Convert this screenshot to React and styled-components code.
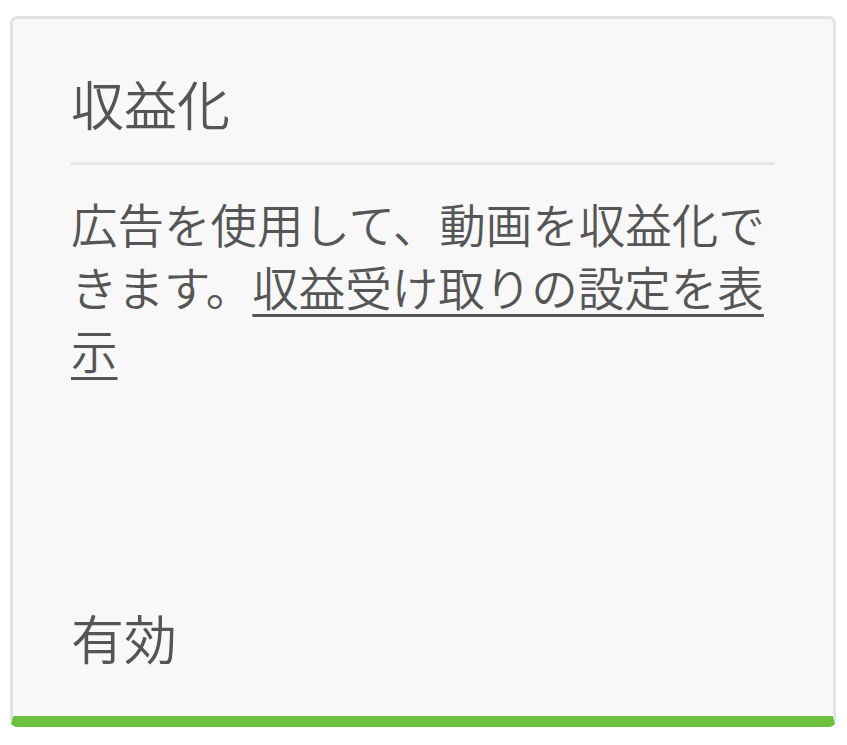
import React from 'react'
import styled, { createGlobalStyle } from 'styled-components'

const GlobalStyle = createGlobalStyle`
  html, body {
    margin: 0;
    padding: 0;
    background: #ffffff;
  }
  body {
    font-family: "Noto Sans CJK JP", "Noto Sans", sans-serif;
    color: #555555;
  }
`

const Page = styled.div`
  padding: 16px 11px 18px 10px;
`

const Card = styled.section`
  box-sizing: border-box;
  height: 711px;
  background: #f8f8f8;
  border: 3px solid #e3e3e3;
  border-bottom: 11px solid #6cc13f;
  border-radius: 7px;
  display: flex;
  flex-direction: column;
  padding: 0 58px;
`

const Title = styled.h2`
  margin: 0;
  padding-top: 45px;
  font-size: 53px;
  font-weight: 350;
  line-height: 78px;
  color: #555555;
`

const Divider = styled.hr`
  margin: 20px 0 0 0;
  border: 0;
  height: 3px;
  background: #e6e6e6;
`

const Description = styled.p`
  margin: 26px 0 0 0;
  font-size: 46.5px;
  font-weight: 350;
  line-height: 63px;
  color: #555555;
`

const Link = styled.a`
  color: #555555;
  text-decoration: underline;
  text-decoration-thickness: 3px;
  text-underline-offset: 8px;
`

const Status = styled.div`
  margin-top: auto;
  margin-bottom: 42px;
  font-size: 53px;
  font-weight: 350;
  line-height: 74px;
  color: #555555;
`

export default function App() {
  return (
    <>
      <GlobalStyle />
      <Page>
        <Card>
          <Title>収益化</Title>
          <Divider />
          <Description>
            広告を使用して、動画を収益化できます。<Link href="#">収益受け取りの設定を表示</Link>
          </Description>
          <Status>有効</Status>
        </Card>
      </Page>
    </>
  )
}
